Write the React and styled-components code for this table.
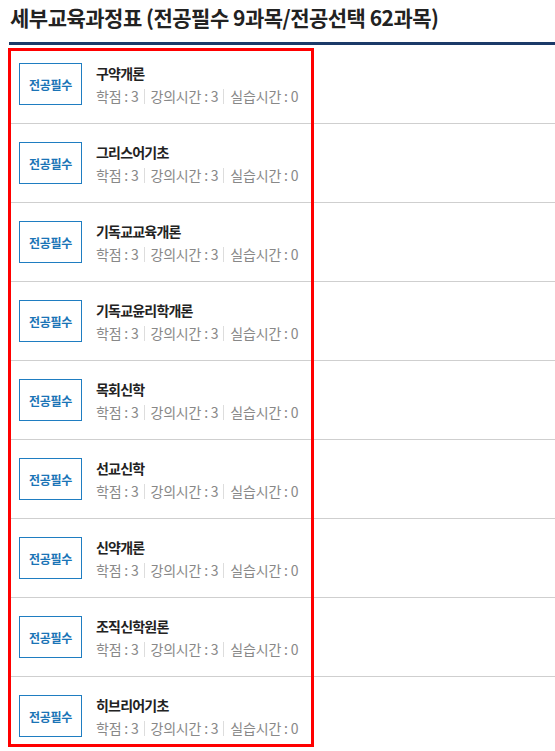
import React from "react";
import styled, { createGlobalStyle } from "styled-components";

const Global = createGlobalStyle`
  html, body { margin: 0; padding: 0; background: #fff; }
  body { font-family: "Noto Sans CJK KR", "Noto Sans", sans-serif; color: #222; }
`;

const Page = styled.div`
  position: relative;
  padding-left: 9px;
  width: 555px;
  box-sizing: border-box;
  overflow: hidden;
`;

const Title = styled.h2`
  margin: 0;
  height: 42px;
  padding-left: 1px;
  font-size: 21px;
  line-height: 34px;
  font-weight: 700;
  letter-spacing: -0.5px;
  color: #222;
  border-bottom: 3px solid #1b3a68;
`;

const List = styled.ul`
  list-style: none;
  margin: 0;
  padding: 0;
`;

const Row = styled.li`
  display: flex;
  align-items: center;
  gap: 14px;
  height: 78px;
  padding-left: 10px;
  border-bottom: 1px solid #cfcfcf;
`;

const Badge = styled.span`
  flex: none;
  box-sizing: border-box;
  width: 63px;
  height: 42px;
  display: flex;
  align-items: center;
  justify-content: center;
  border: 1px solid #1f7dc1;
  color: #1a74b6;
  font-size: 12px;
  font-weight: 700;
  letter-spacing: -0.3px;
`;

const Info = styled.div`
  display: flex;
  flex-direction: column;
  gap: 3px;
  margin-top: 1px;
`;

const Name = styled.strong`
  font-size: 14px;
  line-height: 20px;
  font-weight: 700;
  letter-spacing: -0.8px;
  color: #222;
`;

const Meta = styled.div`
  display: flex;
  align-items: center;
  font-size: 14px;
  line-height: 20px;
  color: #888;
  letter-spacing: -0.2px;
  white-space: pre;
`;

const MetaItem = styled.span`
  & + &::before {
    content: "";
    display: inline-block;
    width: 1px;
    height: 15px;
    background: #ddd;
    margin: 0 6px 0 5px;
    vertical-align: -2px;
  }
`;

const Highlight = styled.div`
  position: absolute;
  left: 8px;
  top: 48px;
  width: 306px;
  height: 699px;
  box-sizing: border-box;
  border: 3px solid #f00;
  pointer-events: none;
`;

const courses = [
  "구약개론",
  "그리스어기초",
  "기독교교육개론",
  "기독교윤리학개론",
  "목회신학",
  "선교신학",
  "신약개론",
  "조직신학원론",
  "히브리어기초",
];

export default function App() {
  return (
    <>
      <Global />
      <Page>
        <Title>세부교육과정표 (전공필수 9과목/전공선택 62과목)</Title>
        <List>
          {courses.map((c) => (
            <Row key={c}>
              <Badge>전공필수</Badge>
              <Info>
                <Name>{c}</Name>
                <Meta>
                  <MetaItem>학점 : 3</MetaItem>
                  <MetaItem>강의시간 : 3</MetaItem>
                  <MetaItem>실습시간 : 0</MetaItem>
                </Meta>
              </Info>
            </Row>
          ))}
        </List>
        <Highlight />
      </Page>
    </>
  );
}
